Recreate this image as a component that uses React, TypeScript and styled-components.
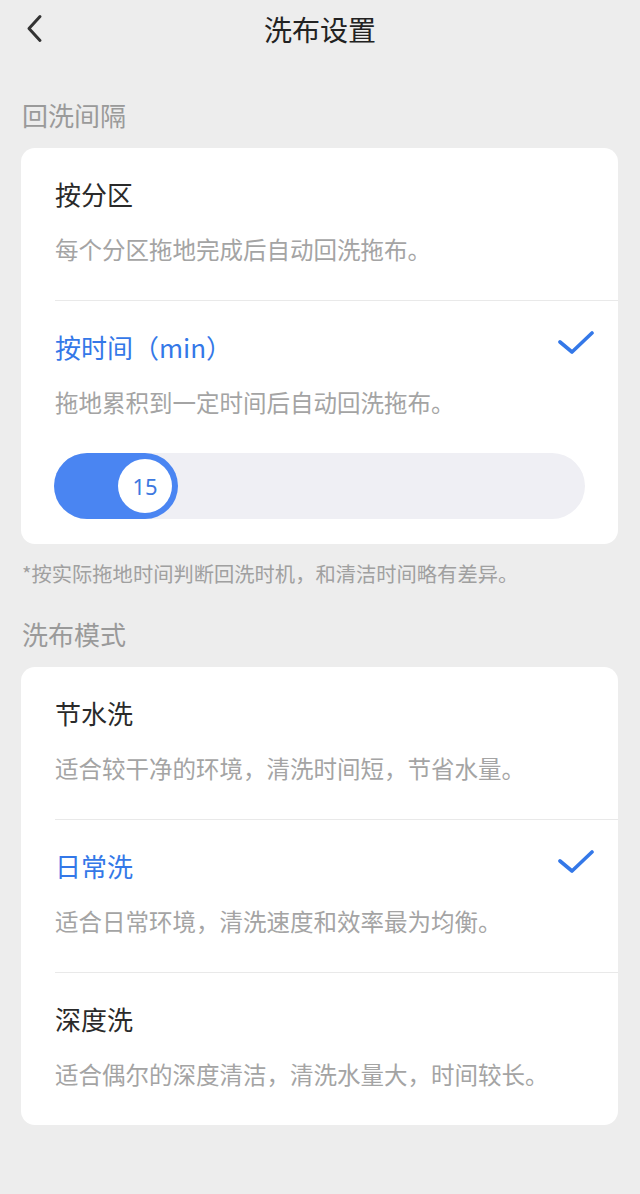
import {useState} from "react";
import styled, {createGlobalStyle} from "styled-components";

const GlobalStyle = createGlobalStyle`
  html, body {
    margin: 0;
    padding: 0;
    background: #ededed;
  }
  body {
    font-family: "Noto Sans CJK SC", "Noto Sans", sans-serif;
  }
`;

const Page = styled.div`
  width: 640px;
  min-height: 1194px;
  background: #ededed;
  padding-bottom: 40px;
  box-sizing: border-box;
`;

const Header = styled.div`
  position: relative;
  height: 58px;
  display: flex;
  align-items: center;
  justify-content: center;
`;

const BackButton = styled.button`
  position: absolute;
  left: 21px;
  top: 13px;
  width: 28px;
  height: 32px;
  padding: 0;
  border: none;
  background: none;
  display: flex;
  align-items: center;
  justify-content: center;
`;

const HeaderTitle = styled.h1`
  margin: 0;
  font-size: 28px;
  font-weight: 400;
  color: #222;
  line-height: 58px;
`;

const SectionLabel = styled.div<{$top: number}>`
  margin: ${(p) => p.$top}px 0 15px 22px;
  font-size: 26px;
  line-height: 36px;
  color: #9a9a9a;
`;

const Card = styled.div`
  margin: 0 22px 0 21px;
  background: #fff;
  border-radius: 14px;
  overflow: hidden;
`;

const Row = styled.div`
  margin-left: 34px;
  padding: 28px 24px 35px 0;
  & + & {
    border-top: 1px solid #e9e9e9;
  }
`;

const TitleLine = styled.div`
  display: flex;
  align-items: center;
  justify-content: space-between;
`;

const Title = styled.div<{$active?: boolean}>`
  font-size: 26px;
  line-height: 36px;
  color: ${(p) => (p.$active ? "#3478e8" : "#2a2a2a")};
`;

const Desc = styled.div`
  margin-top: 21px;
  font-size: 23.5px;
  line-height: 32px;
  color: #a4a4a4;
`;

const CheckMark = styled.svg`
  width: 36px;
  height: 26px;
  margin-top: -8px;
`;

const SliderTrack = styled.div`
  margin: 35px 9px -10px -1px;
  height: 66px;
  border-radius: 33px;
  background: #efeff4;
  display: flex;
`;

const SliderFill = styled.div`
  height: 66px;
  border-radius: 33px;
  background: #4a85f2;
  padding: 6px;
  box-sizing: border-box;
  display: flex;
  justify-content: flex-end;
`;

const Thumb = styled.div`
  width: 54px;
  height: 54px;
  border-radius: 50%;
  background: #fff;
  display: flex;
  align-items: center;
  justify-content: center;
  font-family: "Noto Sans", sans-serif;
  font-size: 22px;
  color: #3d78e0;
`;

const Note = styled.div`
  margin: 14px 0 0 22px;
  font-size: 20.3px;
  line-height: 30px;
  color: #a0a0a0;
`;

const Check = () => (
  <CheckMark viewBox="0 0 36 26">
    <path
      d="M2 12 L14 22 L34 3"
      fill="none"
      stroke="#3478e8"
      strokeWidth="3.6"
      strokeLinecap="round"
      strokeLinejoin="round"
    />
  </CheckMark>
);

const modes = [
  {key: "eco", title: "节水洗", desc: "适合较干净的环境，清洗时间短，节省水量。"},
  {key: "daily", title: "日常洗", desc: "适合日常环境，清洗速度和效率最为均衡。"},
  {key: "deep", title: "深度洗", desc: "适合偶尔的深度清洁，清洗水量大，时间较长。"},
];

const App = () => {
  const [interval] = useState("time");
  const [mode] = useState("daily");
  const minutes = 15;
  // fill ends just past the thumb
  const fillWidth = 66 + (minutes - 10) * 11.6;

  return (
    <Page>
      <GlobalStyle />
      <Header>
        <BackButton aria-label="back">
          <svg width="20" height="30" viewBox="0 0 20 30">
            <path
              d="M15 2.5 L4 14.5 L15 26.5"
              fill="none"
              stroke="#333"
              strokeWidth="3"
              strokeLinecap="round"
              strokeLinejoin="round"
            />
          </svg>
        </BackButton>
        <HeaderTitle>洗布设置</HeaderTitle>
      </Header>

      <SectionLabel $top={39}>回洗间隔</SectionLabel>
      <Card>
        <Row>
          <TitleLine>
            <Title $active={interval === "zone"}>按分区</Title>
            {interval === "zone" && <Check />}
          </TitleLine>
          <Desc>每个分区拖地完成后自动回洗拖布。</Desc>
        </Row>
        <Row>
          <TitleLine>
            <Title $active={interval === "time"}>按时间（min）</Title>
            {interval === "time" && <Check />}
          </TitleLine>
          <Desc>拖地累积到一定时间后自动回洗拖布。</Desc>
          <SliderTrack>
            <SliderFill style={{width: fillWidth}}>
              <Thumb>{minutes}</Thumb>
            </SliderFill>
          </SliderTrack>
        </Row>
      </Card>
      <Note>*按实际拖地时间判断回洗时机，和清洁时间略有差异。</Note>

      <SectionLabel $top={28}>洗布模式</SectionLabel>
      <Card>
        {modes.map((m) => (
          <Row key={m.key}>
            <TitleLine>
              <Title $active={mode === m.key}>{m.title}</Title>
              {mode === m.key && <Check />}
            </TitleLine>
            <Desc>{m.desc}</Desc>
          </Row>
        ))}
      </Card>
    </Page>
  );
};

export default App;
